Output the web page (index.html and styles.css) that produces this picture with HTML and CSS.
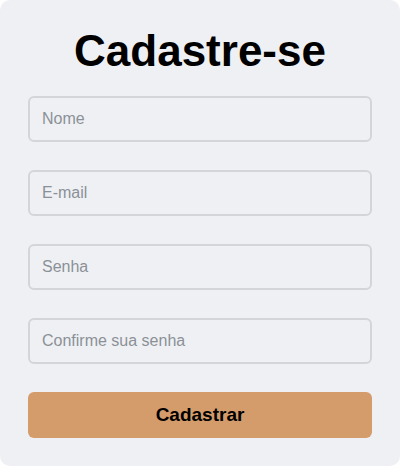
FILE: index.html
```html
<!DOCTYPE html>
<html lang="pt-BR">
<head>
<meta charset="utf-8">
<title>Cadastre-se</title>
<link rel="stylesheet" href="styles.css">
</head>
<body>
<form class="card">
  <h1 class="title">Cadastre-se</h1>
  <input class="field" type="text" placeholder="Nome">
  <input class="field" type="email" placeholder="E-mail">
  <input class="field" type="password" placeholder="Senha">
  <input class="field" type="password" placeholder="Confirme sua senha">
  <button class="submit" type="button">Cadastrar</button>
</form>
</body>
</html>
```
FILE: styles.css
```css
html, body {
  margin: 0;
  padding: 0;
  background: #ffffff;
}
body {
  font-family: "Liberation Sans", Arial, sans-serif;
}
.card {
  box-sizing: border-box;
  width: 400px;
  height: 466px;
  background: #eff0f4;
  border-radius: 10px;
  padding: 26px 28px 28px;
  display: flex;
  flex-direction: column;
  gap: 28px;
}
.title {
  margin: 0 0 -7px;
  font-size: 44px;
  font-weight: 700;
  text-align: center;
  color: #000;
  line-height: 49px;
}
.field {
  box-sizing: border-box;
  height: 46px;
  width: 100%;
  border: 2px solid #d3d5d9;
  border-radius: 6px;
  background: #eff0f4;
  padding: 0 12px;
  font-family: "Liberation Sans", Arial, sans-serif;
  font-size: 16px;
  color: #333;
  outline: none;
}
.field::placeholder {
  color: #8b9097;
}
.submit {
  box-sizing: border-box;
  height: 46px;
  width: 100%;
  border: none;
  border-radius: 6px;
  background: #d49b6b;
  font-family: "Liberation Sans", Arial, sans-serif;
  font-size: 19px;
  font-weight: 700;
  color: #000;
}
```
